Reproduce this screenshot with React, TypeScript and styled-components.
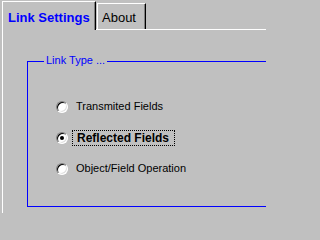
import React from "react";
import styled, { createGlobalStyle } from "styled-components";

const Global = createGlobalStyle`
  html, body { margin: 0; padding: 0; background: #c0c0c0; }
  body { font-family: "Liberation Sans", Arial, sans-serif; }
  * { box-sizing: border-box; }
`;

const Window = styled.div`
  width: 266px;
  height: 213px;
  overflow: hidden;
  background: #c0c0c0;
  display: flex;
  flex-direction: column;
`;

const TabStrip = styled.div`
  display: flex;
  align-items: flex-end;
  height: 29px;
  padding-left: 2px;
  flex-shrink: 0;
`;

const Tab = styled.div<{ $active?: boolean }>`
  position: relative;
  z-index: ${(p) => (p.$active ? 2 : 1)};
  background: #c0c0c0;
  border-top: 1px solid #ffffff;
  border-left: 1px solid #ffffff;
  border-right: 1px solid #000000;
  box-shadow: inset -1px 0 0 #808080;
  white-space: nowrap;
  font-size: 13px;
  line-height: 15px;
  height: ${(p) => (p.$active ? "29px" : "26px")};
  width: ${(p) => (p.$active ? "94px" : "49px")};
  margin-bottom: ${(p) => (p.$active ? "-1px" : "0")};
  margin-left: ${(p) => (p.$active ? "0" : "1px")};
  padding: ${(p) => (p.$active ? "8px 0 0 5px" : "6px 0 0 4px")};
  font-weight: ${(p) => (p.$active ? 700 : 400)};
  color: ${(p) => (p.$active ? "#0000ff" : "#000000")};
`;

const Panel = styled.div`
  flex: 1;
  margin-left: 2px;
  border-top: 1px solid #ffffff;
  border-left: 1px solid #ffffff;
  padding: 31px 0 0 24px;
`;

const GroupBox = styled.div`
  position: relative;
  width: 260px;
  height: 146px;
  border: 1px solid #0000ff;
  padding: 29px 0 0 28px;
  display: flex;
  flex-direction: column;
`;

const Legend = styled.div`
  position: absolute;
  top: -8px;
  left: 16px;
  padding: 0 2px;
  background: #c0c0c0;
  color: #0000ff;
  font-size: 11px;
  line-height: 13px;
  white-space: nowrap;
`;

const Row = styled.div`
  display: flex;
  align-items: center;
  height: 31px;
  gap: 4px;
`;

const RadioCircle = styled.div<{ $checked?: boolean }>`
  position: relative;
  width: 12px;
  height: 12px;
  flex-shrink: 0;
  border-radius: 50%;
  border: 1px solid;
  border-color: #808080 #ffffff #ffffff #808080;
  box-shadow: inset 1px 1px 0 #000000, inset -1px -1px 0 #dfdfdf;
  background: #ffffff;
  &::after {
    content: "";
    display: ${(p) => (p.$checked ? "block" : "none")};
    position: absolute;
    left: 3px;
    top: 3px;
    width: 4px;
    height: 4px;
    border-radius: 50%;
    background: #000000;
  }
`;

const Label = styled.span<{ $focused?: boolean }>`
  border: 1px ${(p) => (p.$focused ? "dotted #000000" : "solid transparent")};
  padding: 0 ${(p) => (p.$focused ? "5px 0 4px" : "3px")};
  font-size: ${(p) => (p.$focused ? "12px" : "11px")};
  line-height: ${(p) => (p.$focused ? "14px" : "13px")};
  font-weight: ${(p) => (p.$focused ? 700 : 400)};
  color: #000000;
  white-space: nowrap;
`;

const options = [
  { label: "Transmited Fields", checked: false },
  { label: "Reflected Fields", checked: true },
  { label: "Object/Field Operation", checked: false },
];

export default function App() {
  return (
    <>
      <Global />
      <Window>
        <TabStrip>
          <Tab $active>Link Settings</Tab>
          <Tab>About</Tab>
        </TabStrip>
        <Panel>
          <GroupBox>
            <Legend>Link Type ...</Legend>
            {options.map((o) => (
              <Row key={o.label}>
                <RadioCircle $checked={o.checked} />
                <Label $focused={o.checked}>{o.label}</Label>
              </Row>
            ))}
          </GroupBox>
        </Panel>
      </Window>
    </>
  );
}
